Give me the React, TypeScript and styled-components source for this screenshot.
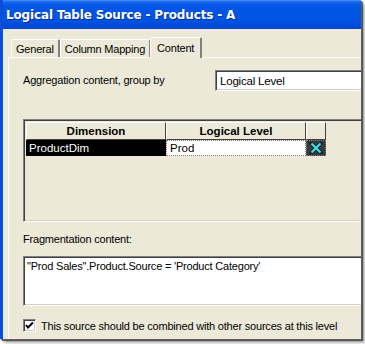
import React from "react";
import styled, { createGlobalStyle } from "styled-components";

const Global = createGlobalStyle`
  html, body { margin: 0; padding: 0; background: #ffffff; }
  body { font-family: "Liberation Sans", Arial, sans-serif; font-size: 11px; letter-spacing: -0.2px; color: #000; }
`;

const Page = styled.div`
  width: 365px;
  height: 344px;
  overflow: hidden;
  position: relative;
  background: #ffffff;
`;

const Window = styled.div`
  width: 358px;
  height: 339px;
  border-left: 3px solid #0a4fdc;
  background: #ece9d8;
  overflow: hidden;
  display: flex;
  flex-direction: column;
  box-shadow: 1px 1px 0 #606060, 2px 2px 1px rgba(0,0,0,0.55), 4px 4px 3px rgba(0,0,0,0.3);
`;

const TitleBar = styled.div`
  height: 29px;
  flex: none;
  margin-left: -3px;
  padding-left: 6px;
  display: flex;
  align-items: center;
  background: linear-gradient(to bottom, #4d95fb 0px, #1766ef 2px, #0a5ae8 4px, #0055e5 9px, #0054e3 20px, #004ada 26px, #0044d0 29px);
  color: #fff;
  font-family: "DejaVu Sans", "Liberation Sans", sans-serif;
  font-weight: bold;
  font-size: 12px;
  letter-spacing: -0.15px;
  text-shadow: 1px 1px 0 #0a2f8f;
`;

const Body = styled.div`
  flex: 1;
  padding: 8px 0 0 5px;
  display: flex;
  flex-direction: column;
`;

const TabStrip = styled.div`
  height: 20px;
  display: flex;
  align-items: flex-end;
  padding-left: 3px;
  position: relative;
  z-index: 1;
`;

const Tab = styled.div<{ $active?: boolean }>`
  height: ${p => (p.$active ? 21 : 18)}px;
  box-sizing: border-box;
  padding: 0 ${p => (p.$active ? 6 : 4)}px ${p => (p.$active ? 1 : 0)}px;
  margin-left: ${p => (p.$active ? -1 : 0)}px;
  margin-bottom: ${p => (p.$active ? -1 : 0)}px;
  display: flex;
  align-items: center;
  background: #ece9d8;
  border-top: 1px solid #ffffff;
  border-left: 1px solid #ffffff;
  border-right: 2px solid #808080;
  border-radius: 2px 2px 0 0;
  white-space: nowrap;
`;

const Panel = styled.div`
  flex: 1;
  border-top: 1px solid #ffffff;
  border-left: 1px solid #ffffff;
  padding: 12px 0 0 14px;
  width: 420px;
  display: flex;
  flex-direction: column;
`;

const FieldRow = styled.div`
  display: flex;
  align-items: center;
  height: 21px;
`;

const Label = styled.div`
  width: 192px;
  line-height: 13px;
  white-space: nowrap;
`;

const sunken = `
  box-sizing: border-box;
  border-style: solid;
  border-width: 1px;
  border-color: #808080 #ffffff #ffffff #808080;
  box-shadow: inset 1px 1px 0 #404040, inset -1px -1px 0 #d4d0c8;
`;

const TextBox = styled.div`
  ${sunken}
  width: 200px;
  height: 21px;
  background: #fff;
  padding: 0 0 0 4px;
  display: flex;
  align-items: center;
  font-size: 11.5px;
`;

const Grid = styled.div`
  ${sunken}
  margin-top: 28px;
  height: 103px;
  padding: 2px;
  background: #ece9d8;
`;

const GridRow = styled.div`
  display: flex;
`;

const HeadCell = styled.div<{ $w: number }>`
  width: ${p => p.$w}px;
  box-sizing: border-box;
  height: 18px;
  display: flex;
  align-items: center;
  justify-content: center;
  font-weight: bold;
  font-size: 11.5px;
  letter-spacing: 0;
  background: #ece9d8;
  border-top: 1px solid #ffffff;
  border-left: 1px solid #ffffff;
  border-right: 1px solid #404040;
  border-bottom: 1px solid #404040;
`;

const DataCell = styled.div<{ $w: number; $kind: "sel" | "edit" | "del" }>`
  width: ${p => p.$w}px;
  box-sizing: border-box;
  height: 16px;
  display: flex;
  align-items: center;
  padding-left: 3px;
  font-size: 11.5px;
  letter-spacing: 0;
  background: ${p => (p.$kind === "sel" ? "#000" : p.$kind === "edit" ? "#fff" : "#3a3a3a")};
  color: ${p => (p.$kind === "sel" ? "#fff" : "#000")};
  border: ${p => (p.$kind === "sel" ? "none" : "1px dotted #7a7a7a")};
  ${p => (p.$kind === "del" ? "justify-content: center; padding-left: 0;" : "")}
`;

const SectionLabel = styled.div`
  margin-top: 11px;
  line-height: 13px;
`;

const TextArea = styled.div`
  ${sunken}
  margin-top: 10px;
  height: 50px;
  background: #fff;
  padding: 3px 0 0 3px;
  line-height: 13px;
`;

const CheckRow = styled.div`
  margin-top: 13px;
  display: flex;
  align-items: center;
  gap: 5px;
`;

const CheckBox = styled.div`
  ${sunken}
  width: 13px;
  height: 13px;
  background: #fff;
  display: flex;
  align-items: center;
  justify-content: center;
`;

const XIcon = () => (
  <svg width="14" height="12" viewBox="0 0 14 12">
    <path d="M2 1 L12 11 M12 1 L2 11" stroke="#0e2a2e" strokeWidth="4" strokeLinecap="square" />
    <path d="M2.5 1.5 L11.5 10.5 M11.5 1.5 L2.5 10.5" stroke="#45dde6" strokeWidth="2.2" />
  </svg>
);

const Check = () => (
  <svg width="9" height="9" viewBox="0 0 9 9">
    <path d="M1 4 L3 6.5 L8 1.5" stroke="#000" strokeWidth="2" fill="none" />
  </svg>
);

export default function App() {
  return (
    <Page>
      <Global />
      <Window>
        <TitleBar>Logical Table Source - Products - A</TitleBar>
        <Body>
          <TabStrip>
            <Tab>General</Tab>
            <Tab>Column Mapping</Tab>
            <Tab $active>Content</Tab>
          </TabStrip>
          <Panel>
            <FieldRow>
              <Label>Aggregation content, group by</Label>
              <TextBox>Logical Level</TextBox>
            </FieldRow>
            <Grid>
              <GridRow>
                <HeadCell $w={140}>Dimension</HeadCell>
                <HeadCell $w={140}>Logical Level</HeadCell>
                <HeadCell $w={20} />
              </GridRow>
              <GridRow>
                <DataCell $w={140} $kind="sel">ProductDim</DataCell>
                <DataCell $w={140} $kind="edit">Prod</DataCell>
                <DataCell $w={20} $kind="del"><XIcon /></DataCell>
              </GridRow>
            </Grid>
            <SectionLabel>Fragmentation content:</SectionLabel>
            <TextArea>"Prod Sales".Product.Source = 'Product Category'</TextArea>
            <CheckRow>
              <CheckBox><Check /></CheckBox>
              <span>This source should be combined with other sources at this level</span>
            </CheckRow>
          </Panel>
        </Body>
      </Window>
    </Page>
  );
}
